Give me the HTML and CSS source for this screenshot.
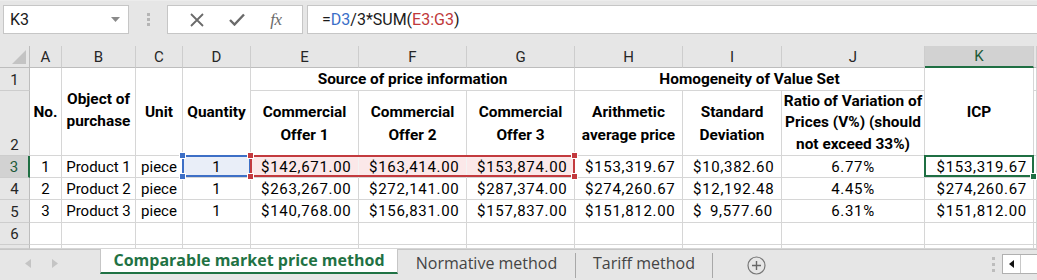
FILE: index.html
```html
<!DOCTYPE html>
<html lang="en">
<head>
<meta charset="utf-8">
<title>Comparable market price method</title>
<link rel="stylesheet" href="styles.css">
</head>
<body>
<div class="app">
  <div class="fbar">
    <div class="namebox"><span>K3</span><svg class="caret" width="9" height="5" viewBox="0 0 9 5"><path d="M0 0h9L4.5 5z" fill="#8a8a8a"/></svg></div>
    <div class="vdots"><i></i><i></i><i></i></div>
    <div class="fbtns">
      <svg width="14" height="14" viewBox="0 0 14 14"><path d="M1 1L13 13M13 1L1 13" stroke="#6a6a6a" stroke-width="1.8" fill="none"/></svg>
      <svg width="16" height="13" viewBox="0 0 16 13"><path d="M1 7l4.5 4.5L15 1.5" stroke="#6a6a6a" stroke-width="2.4" fill="none"/></svg>
      <span class="fx">fx</span>
    </div>
    <div class="formula">=<span class="rb-t">D3</span>/3*SUM(<span class="rr-t">E3:G3</span>)</div>
  </div>

  <div class="sheet">
    <div class="corner"><i></i></div>
    <div class="ch">A</div><div class="ch">B</div><div class="ch">C</div><div class="ch">D</div><div class="ch">E</div><div class="ch">F</div><div class="ch">G</div><div class="ch">H</div><div class="ch">I</div><div class="ch">J</div><div class="ch csel">K</div><div class="ch"></div>

    <div class="rh">1</div>
    <div class="c hd m2">No.</div>
    <div class="c hd m2 lh2">Object of<br>purchase</div>
    <div class="c hd m2">Unit</div>
    <div class="c hd m2">Quantity</div>
    <div class="c hd s3">Source of price information</div>
    <div class="c hd s3">Homogeneity of Value Set</div>
    <div class="c hd m2">ICP</div>
    <div class="c"></div>

    <div class="rh">2</div>
    <div class="c hd two">Commercial<br>Offer 1</div>
    <div class="c hd two">Commercial<br>Offer 2</div>
    <div class="c hd two">Commercial<br>Offer 3</div>
    <div class="c hd two">Arithmetic<br>average price</div>
    <div class="c hd two">Standard<br>Deviation</div>
    <div class="c hd three">Ratio of Variation of<br>Prices (V%) (should<br>not exceed 33%)</div>
    <div class="c"></div>

    <div class="rh rsel">3</div>
    <div class="c ctr">1</div>
    <div class="c ctr">Product 1</div>
    <div class="c ctr">piece</div>
    <div class="c ctr rb"><i class="hdl tl b"></i><i class="hdl bl b"></i>1</div>
    <div class="c acc rr rl"><i class="hdl tl r"></i><i class="hdl bl r"></i><span>$</span><span>142,671.00</span></div>
    <div class="c acc rr rm"><span>$</span><span>163,414.00</span></div>
    <div class="c acc rr rrt"><i class="hdl tr r"></i><i class="hdl br r"></i><span>$</span><span>153,874.00</span></div>
    <div class="c acc"><span>$</span><span>153,319.67</span></div>
    <div class="c acc"><span>$</span><span>10,382.60</span></div>
    <div class="c ctr num">6.77%</div>
    <div class="c cur num"><i class="hdl br g"></i>$153,319.67</div>
    <div class="c"></div>

    <div class="rh">4</div>
    <div class="c ctr">2</div>
    <div class="c ctr">Product 2</div>
    <div class="c ctr">piece</div>
    <div class="c ctr">1</div>
    <div class="c acc"><span>$</span><span>263,267.00</span></div>
    <div class="c acc"><span>$</span><span>272,141.00</span></div>
    <div class="c acc"><span>$</span><span>287,374.00</span></div>
    <div class="c acc"><span>$</span><span>274,260.67</span></div>
    <div class="c acc"><span>$</span><span>12,192.48</span></div>
    <div class="c ctr num">4.45%</div>
    <div class="c cur-n num">$274,260.67</div>
    <div class="c"></div>

    <div class="rh">5</div>
    <div class="c ctr">3</div>
    <div class="c ctr">Product 3</div>
    <div class="c ctr">piece</div>
    <div class="c ctr">1</div>
    <div class="c acc"><span>$</span><span>140,768.00</span></div>
    <div class="c acc"><span>$</span><span>156,831.00</span></div>
    <div class="c acc"><span>$</span><span>157,837.00</span></div>
    <div class="c acc"><span>$</span><span>151,812.00</span></div>
    <div class="c acc"><span>$</span><span>9,577.60</span></div>
    <div class="c ctr num">6.31%</div>
    <div class="c cur-n num">$151,812.00</div>
    <div class="c"></div>

    <div class="rh">6</div>
    <div class="c"></div><div class="c"></div><div class="c"></div><div class="c"></div><div class="c"></div><div class="c"></div><div class="c"></div><div class="c"></div><div class="c"></div><div class="c"></div><div class="c"></div><div class="c"></div>

    <div class="rh"></div>
    <div class="c"></div><div class="c"></div><div class="c"></div><div class="c"></div><div class="c"></div><div class="c"></div><div class="c"></div><div class="c"></div><div class="c"></div><div class="c"></div><div class="c"></div><div class="c"></div>
  </div>

  <div class="tabs">
    <div class="nav">
      <svg width="6" height="9" viewBox="0 0 6 9"><path d="M6 0v9L0 4.5z" fill="#c4c4c4"/></svg>
      <svg width="6" height="9" viewBox="0 0 6 9"><path d="M0 0v9l6-4.5z" fill="#c4c4c4"/></svg>
    </div>
    <div class="tab active">Comparable market price method</div>
    <div class="tab t2">Normative method</div>
    <div class="tab t3">Tariff method</div>
    <div class="add"><svg width="19" height="19" viewBox="0 0 19 19"><circle cx="9.5" cy="9.5" r="8.5" fill="none" stroke="#777" stroke-width="1.2"/><path d="M9.5 5v9M5 9.5h9" stroke="#666" stroke-width="1.4"/></svg></div>
    <div class="spacer"></div>
    <div class="vdots small"><i></i><i></i><i></i></div>
    <div class="hscroll"><svg width="5" height="8" viewBox="0 0 5 8"><path d="M5 0v8L0 4z" fill="#111"/></svg><span class="sep"></span></div>
  </div>
</div>
</body>
</html>
```
FILE: styles.css
```css
html, body {
  margin: 0;
  padding: 0;
  background: #e6e6e6;
}

.app {
  width: 1037px;
  height: 280px;
  overflow: hidden;
  display: flex;
  flex-direction: column;
  font-family: Roboto, "Liberation Sans", sans-serif;
  color: #000;
}

/* ---------- formula bar ---------- */
.fbar {
  height: 46px;
  flex: none;
  box-sizing: border-box;
  padding-top: 4px;
  display: flex;
  align-items: flex-start;
  background: #e6e6e6;
  border-top: 1px solid #ececec;
}

.namebox {
  margin-left: 3px;
  width: 126px;
  height: 29px;
  box-sizing: border-box;
  background: #fff;
  border: 1px solid #c6c6c6;
  display: flex;
  align-items: center;
  justify-content: space-between;
  padding: 0 8px 0 6px;
  font-size: 16px;
  color: #1a1a1a;
}

.vdots {
  width: 38px;
  height: 29px;
  display: flex;
  flex-direction: column;
  align-items: center;
  justify-content: center;
  gap: 2px;
}

.vdots i {
  display: block;
  width: 3px;
  height: 3px;
  background: #b5b5b5;
}

.fbtns {
  width: 136px;
  height: 29px;
  box-sizing: border-box;
  background: #fff;
  border: 1px solid #c6c6c6;
  display: flex;
  align-items: center;
  justify-content: space-around;
  padding: 0 8px 0 10px;
}

.fx {
  font-family: "Liberation Serif", serif;
  font-style: italic;
  font-size: 17px;
  color: #6a6a6a;
  letter-spacing: -0.5px;
}

.formula {
  margin-left: 4px;
  flex: 1;
  height: 29px;
  box-sizing: border-box;
  background: #fff;
  border: 1px solid #c6c6c6;
  border-right: 0;
  display: flex;
  align-items: center;
  padding-left: 14px;
  font-size: 16px;
  color: #1a1a1a;
  white-space: pre;
}

.rb-t { color: #3a6fc8; }
.rr-t { color: #c0393b; }

/* ---------- sheet grid ---------- */
.sheet {
  flex: none;
  height: 203px;
  display: grid;
  grid-template-columns: 30px 32px 74px 47px 68px 108px 108px 108px 108px 99px 143px 109px 3px;
  grid-template-rows: 22px 23px 65px 22px 22px 23px 22px 4px;
  background: #fff;
  font-size: 15px;
}

.corner {
  position: relative;
  background: #e6e6e6;
  border-right: 1px solid #bdbdbd;
  border-bottom: 1px solid #bdbdbd;
}

.corner i {
  position: absolute;
  right: 3px;
  bottom: 3px;
  width: 0;
  height: 0;
  border-left: 14px solid transparent;
  border-bottom: 14px solid #c3c3c3;
}

.ch {
  background: #e6e6e6;
  border-right: 1px solid #cdcdcd;
  border-bottom: 1px solid #bdbdbd;
  display: flex;
  align-items: center;
  justify-content: center;
  color: #262626;
  font-size: 15px;
}

.ch.csel {
  background: #d2d2d2;
  border-bottom: 2px solid #1f6f43;
  color: #1e5a38;
}

.rh {
  background: #e6e6e6;
  border-right: 1px solid #bdbdbd;
  border-bottom: 1px solid #cdcdcd;
  display: flex;
  align-items: flex-end;
  justify-content: center;
  color: #262626;
  font-size: 15px;
  line-height: 20px;
  overflow: hidden;
}

.rh.rsel {
  background: #d2d2d2;
  border-right: 2px solid #1f6f43;
  color: #1e5a38;
}

.c {
  position: relative;
  box-sizing: border-box;
  border-right: 1px solid #d6d6d6;
  border-bottom: 1px solid #d6d6d6;
  display: flex;
  align-items: center;
  white-space: nowrap;
}

.hd {
  justify-content: center;
  text-align: center;
  font-weight: 700;
  font-size: 15.4px;
  line-height: 22px;
}

.m2 { grid-row: span 2; }
.s3 { grid-column: span 3; }
.lh2 { line-height: 21.5px; padding-bottom: 2px; }
.two { line-height: 23px; padding-top: 2px; }
.three {
  line-height: 21.3px;
  align-items: flex-end;
  padding-bottom: 0;
  overflow: hidden;
}

.ctr { justify-content: center; }

.num, .acc { letter-spacing: 0.7px; }

.acc {
  justify-content: space-between;
  padding: 0 8px 0 10px;
}

.cur, .cur-n {
  justify-content: flex-end;
  padding-right: 6px;
}

/* range highlights */
.rb { background: #e9eef8; }
.rb::after {
  content: "";
  position: absolute;
  inset: -1px -1px 0 -1px;
  border: 2px solid #3d6fc6;
  pointer-events: none;
}

.rr { background: #fbe8e9; }
.rr::after {
  content: "";
  position: absolute;
  top: -1px;
  bottom: 0;
  left: -1px;
  right: -1px;
  border-top: 2px solid #c33a3e;
  border-bottom: 2px solid #c33a3e;
  pointer-events: none;
}
.rl::after { border-left: 2px solid #c33a3e; }
.rrt::after { border-right: 2px solid #c33a3e; }
.rm { border-right-color: #f3f3f3; }
.rl { border-right-color: #f3f3f3; }

.cur::after {
  content: "";
  position: absolute;
  inset: -1px -1px 0 -1px;
  border: 2px solid #1f6f43;
  pointer-events: none;
}

.hdl {
  position: absolute;
  width: 5px;
  height: 5px;
  z-index: 2;
  border: 1px solid #fff;
}
.hdl.b { background: #3d6fc6; }
.hdl.r { background: #c33a3e; }
.hdl.g { background: #1f6f43; }
.hdl.tl { top: -4px; left: -4px; }
.hdl.bl { bottom: -3px; left: -4px; }
.hdl.tr { top: -4px; right: -4px; }
.hdl.br { bottom: -3px; right: -4px; }

/* ---------- sheet tabs ---------- */
.tabs {
  flex: 1;
  display: flex;
  align-items: flex-start;
  background: #e6e6e6;
  border-top: 1px solid #c6c6c6;
  font-family: "Open Sans", "Liberation Sans", sans-serif;
  font-size: 16px;
}

.nav {
  width: 100px;
  height: 26px;
  display: flex;
  align-items: center;
  gap: 21px;
  padding-left: 25px;
  box-sizing: border-box;
}

.tab {
  height: 25px;
  display: flex;
  align-items: center;
  justify-content: center;
  box-sizing: border-box;
  color: #444;
  white-space: nowrap;
}

.tab.active {
  width: 298px;
  margin-top: -1px;
  height: 25px;
  background: #fff;
  border-left: 1px solid #c6c6c6;
  border-right: 1px solid #c6c6c6;
  border-bottom: 2px solid #1f7244;
  color: #1f7244;
  font-weight: 700;
  padding-bottom: 1px;
}

.tab.t2,
.tab.t3 {
  border-right: 1px solid #a8a8a8;
  margin-top: 3px;
  padding-bottom: 6px;
  box-sizing: content-box;
  height: 19px;
}

.tab.t2 { width: 177px; }
.tab.t3 { width: 136px; }

.add {
  width: 86px;
  height: 30px;
  display: flex;
  align-items: center;
  justify-content: center;
}

.spacer { flex: 1; }

.vdots.small {
  width: 18px;
  height: 28px;
  gap: 3px;
}

.vdots.small i {
  width: 3px;
  height: 3px;
  background: #bdbdbd;
}

.hscroll {
  width: 36px;
  height: 20px;
  margin-top: 4px;
  margin-right: -1px;
  box-sizing: border-box;
  background: #fff;
  border: 1px solid #b0b0b0;
  display: flex;
  align-items: center;
  padding-left: 6px;
  gap: 6px;
}

.hscroll .sep {
  width: 1px;
  height: 18px;
  background: #c8c8c8;
}
```
